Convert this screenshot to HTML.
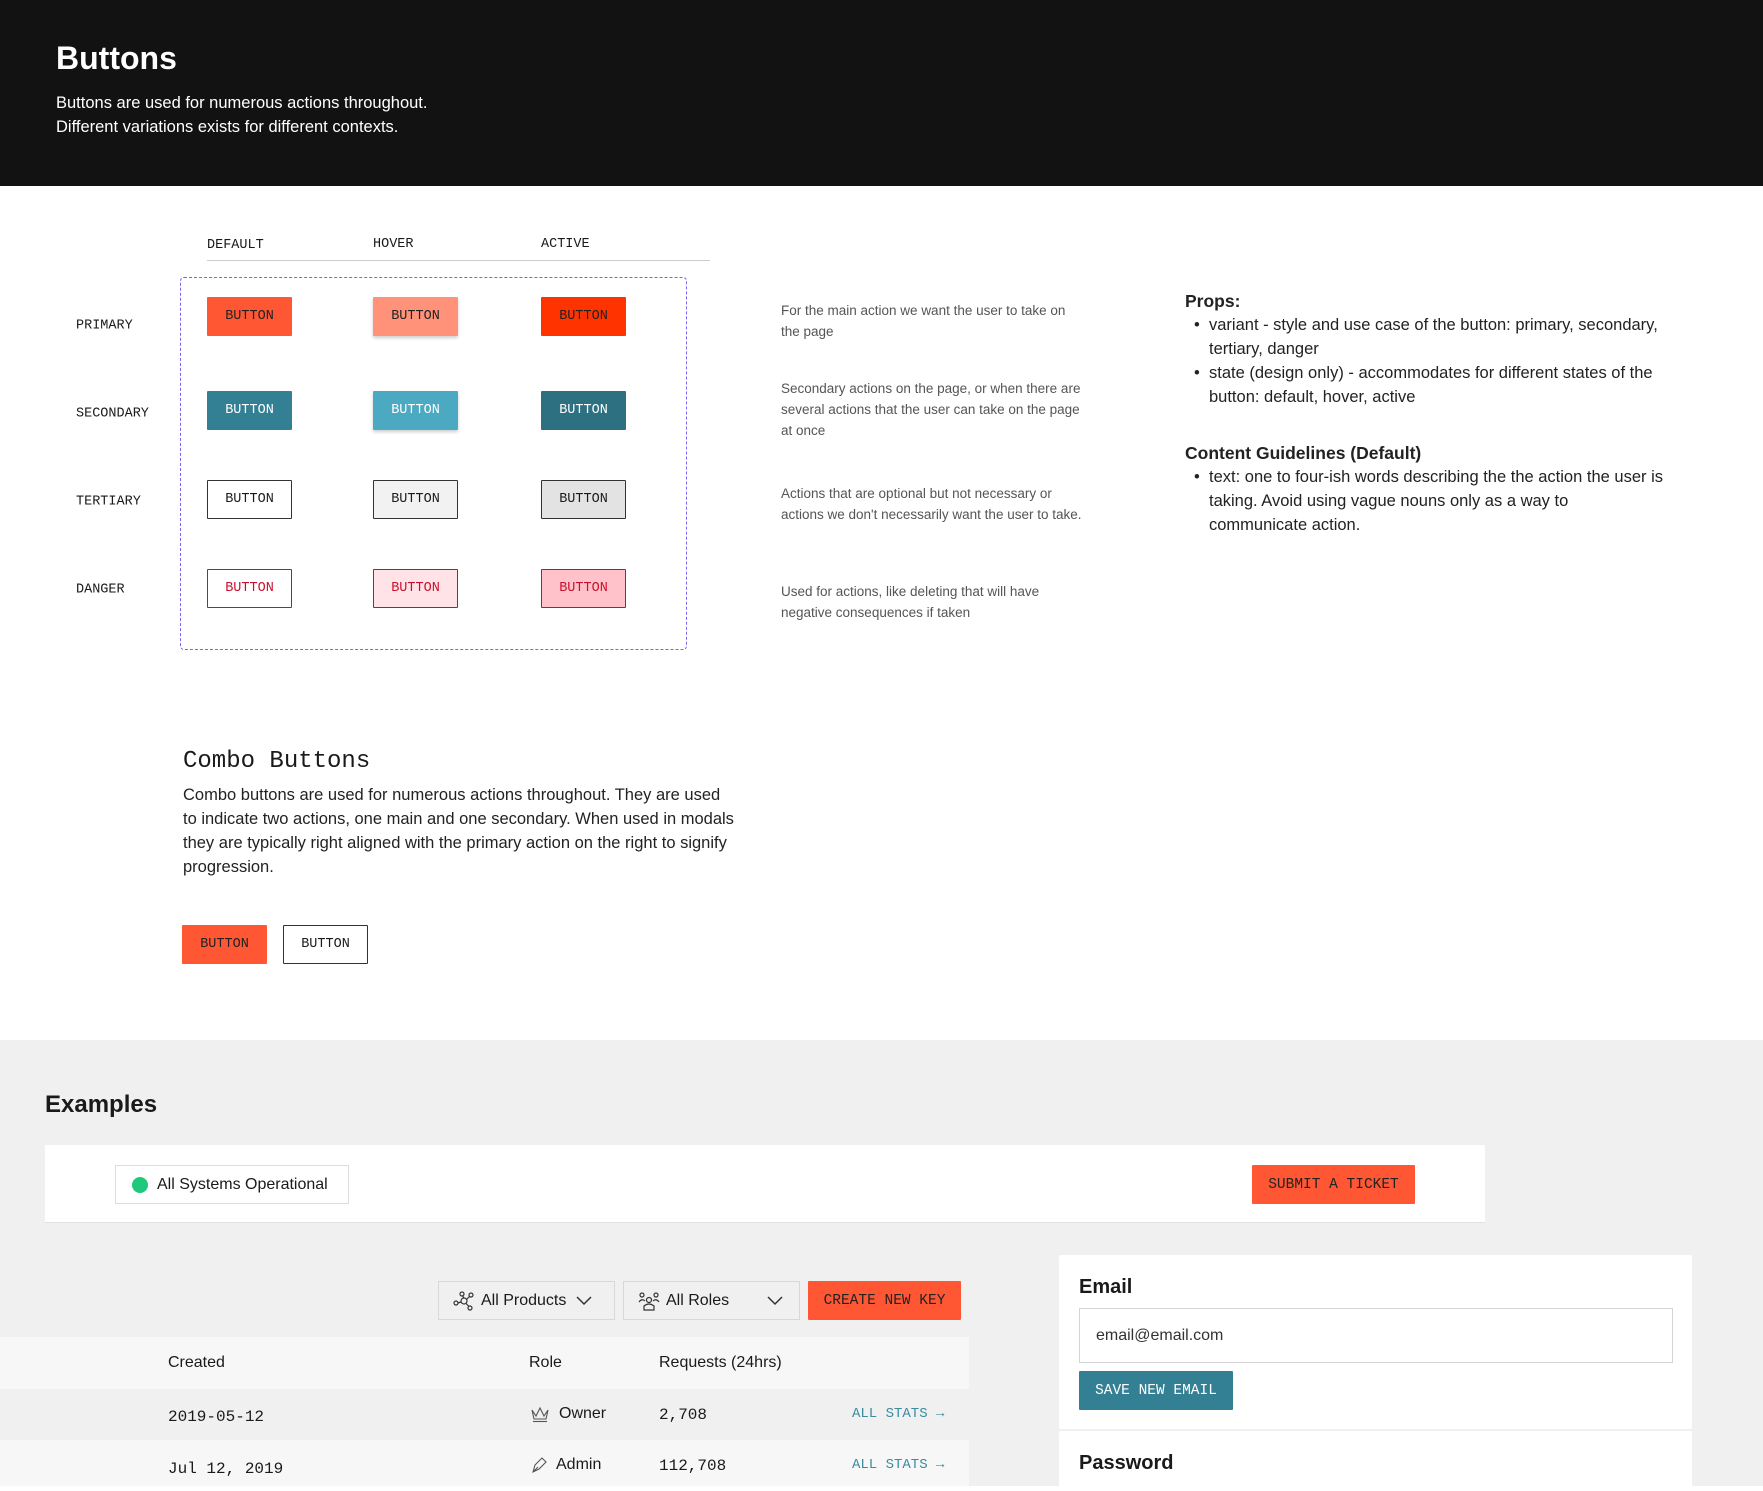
<!DOCTYPE html>
<html><head><meta charset="utf-8"><style>
*{margin:0;padding:0;box-sizing:border-box}
body{width:1763px;height:1486px;position:relative;overflow:hidden;background:#fff;font-family:"Liberation Sans",sans-serif;color:#1a1a1a}
.a{position:absolute}
.m{font-family:"Liberation Mono",monospace}
.hdr{left:0;top:0;width:1763px;height:186px;background:#121212;color:#fff}
.btn{position:absolute;width:85px;height:39px;font-family:"Liberation Mono",monospace;font-size:13.5px;display:flex;align-items:center;justify-content:center;border-radius:1px}
.lbl{position:absolute;left:76px;font-family:"Liberation Mono",monospace;font-size:13.5px;transform:translateY(-50%)}
.desc{position:absolute;left:781px;width:305px;font-size:13.5px;line-height:21px;color:#555}
.p{font-size:16.5px;line-height:24px;color:#222}
ul{list-style:none}
li{position:relative;padding-left:24px}
li:before{content:"•";position:absolute;left:9px}
</style></head><body>
<div class="a hdr">
 <div class="a" style="left:56px;top:40px;font-size:32px;font-weight:bold">Buttons</div>
 <div class="a" style="left:56px;top:91px;font-size:16.5px;line-height:24px">Buttons are used for numerous actions throughout.<br>Different variations exists for different contexts.</div>
</div>

<div class="a m" style="left:207px;top:238px;font-size:13.5px">DEFAULT</div>
<div class="a m" style="left:373px;top:237px;font-size:13.5px">HOVER</div>
<div class="a m" style="left:541px;top:237px;font-size:13.5px">ACTIVE</div>
<div class="a" style="left:207px;top:260px;width:503px;height:1px;background:#ccc"></div>
<div class="a" style="left:180px;top:277px;width:507px;height:373px;border:1.5px dashed #7a63f5;border-radius:4px"></div>

<div class="lbl" style="top:326px">PRIMARY</div>
<div class="lbl" style="top:414px">SECONDARY</div>
<div class="lbl" style="top:502px">TERTIARY</div>
<div class="lbl" style="top:590px">DANGER</div>

<div class="btn" style="left:207px;top:297px;background:#ff5733;color:#222">BUTTON</div>
<div class="btn" style="left:373px;top:297px;background:#ff9279;color:#222;box-shadow:0 2px 3px rgba(0,0,0,.2)">BUTTON</div>
<div class="btn" style="left:541px;top:297px;background:#ff3300;color:#222">BUTTON</div>

<div class="btn" style="left:207px;top:391px;background:#337f93;color:#fff">BUTTON</div>
<div class="btn" style="left:373px;top:391px;background:#4ba9c2;color:#fff;box-shadow:0 2px 3px rgba(0,0,0,.2)">BUTTON</div>
<div class="btn" style="left:541px;top:391px;background:#2c7082;color:#fff">BUTTON</div>

<div class="btn" style="left:207px;top:480px;border:1.5px solid #333;background:#fff">BUTTON</div>
<div class="btn" style="left:373px;top:480px;border:1.5px solid #333;background:#f2f2f2">BUTTON</div>
<div class="btn" style="left:541px;top:480px;border:1.5px solid #333;background:#e3e3e3">BUTTON</div>

<div class="btn" style="left:207px;top:569px;border:1.5px solid #c8102e;background:#fff;color:#c8102e">BUTTON</div>
<div class="btn" style="left:373px;top:569px;border:1.5px solid #c8102e;background:#ffe3e6;color:#c8102e">BUTTON</div>
<div class="btn" style="left:541px;top:569px;border:1.5px solid #c8102e;background:#ffc2ca;color:#c8102e">BUTTON</div>

<div class="desc" style="top:300px">For the main action we want the user to take on the page</div>
<div class="desc" style="top:378px">Secondary actions on the page, or when there are several actions that the user can take on the page at once</div>
<div class="desc" style="top:483px">Actions that are optional but not necessary or actions we don't necessarily want the user to take.</div>
<div class="desc" style="top:581px">Used for actions, like deleting that will have negative consequences if taken</div>

<div class="a p" style="left:1185px;top:289px;width:485px">
 <div style="font-weight:bold;font-size:17.5px">Props:</div>
 <ul><li>variant - style and use case of the button: primary, secondary, tertiary, danger</li>
 <li>state (design only) - accommodates for different states of the button: default, hover, active</li></ul>
 <div style="font-weight:bold;font-size:17.5px;margin-top:32px">Content Guidelines (Default)</div>
 <ul><li>text: one to four-ish words describing the the action the user is taking. Avoid using vague nouns only as a way to communicate action.</li></ul>
</div>

<div class="a m" style="left:183px;top:748px;font-size:24px">Combo Buttons</div>
<div class="a p" style="left:183px;top:783px;width:555px">Combo buttons are used for numerous actions throughout. They are used to indicate two actions, one main and one secondary. When used in modals they are typically right aligned with the primary action on the right to signify progression.</div>
<div class="btn" style="left:182px;top:925px;background:#ff5733;color:#222">BUTTON</div>
<div class="btn" style="left:283px;top:925px;border:1.5px solid #333;background:#fff">BUTTON</div>

<div class="a" style="left:0;top:1040px;width:1763px;height:446px;background:#f0f0f0"></div>
<div class="a" style="left:45px;top:1091px;font-size:24px;font-weight:bold">Examples</div>
<div class="a" style="left:45px;top:1145px;width:1440px;height:78px;background:#fff;border-bottom:1.5px solid #e2e2e2"></div>
<div class="a" style="left:115px;top:1165px;width:234px;height:39px;border:1.5px solid #ddd;background:#fff;display:flex;align-items:center;font-size:16px">
 <span style="width:16px;height:16px;border-radius:50%;background:#1ec97c;margin:0 9px 0 16px"></span>All Systems Operational</div>
<div class="btn" style="left:1252px;top:1165px;width:163px;background:#ff5733;color:#222;font-size:14.5px">SUBMIT A TICKET</div>

<div class="a" style="left:438px;top:1281px;width:177px;height:39px;border:1.5px solid #d8d8d8;background:#f0f0f0;display:flex;align-items:center;font-size:16px">
 <svg width="22" height="20" style="margin:0 6px 0 14px" fill="none" stroke="#333" stroke-width="1.2"><circle cx="3" cy="12" r="2"/><circle cx="11" cy="10" r="3"/><circle cx="9" cy="3" r="2"/><circle cx="18" cy="4" r="2"/><circle cx="17" cy="17" r="2"/><path d="M5 12L8 11M10 5L10.5 7M16.5 5.5L13.5 8.5M13 12.5L16 15.5"/></svg>All Products
 <svg width="16" height="10" style="margin-left:10px" fill="none" stroke="#333" stroke-width="1.5"><path d="M1 1L8 8L15 1"/></svg></div>
<div class="a" style="left:623px;top:1281px;width:177px;height:39px;border:1.5px solid #d8d8d8;background:#f0f0f0;display:flex;align-items:center;font-size:16px">
 <svg width="22" height="20" style="margin:0 6px 0 14px" fill="none" stroke="#333" stroke-width="1.2"><circle cx="4" cy="4" r="2"/><circle cx="18" cy="4" r="2"/><circle cx="11" cy="9" r="2.5"/><path d="M1 11Q4 7 7 10M21 11Q18 7 15 10M6 19V15Q11 11 16 15V19Z"/></svg>All Roles
 <svg width="16" height="10" style="margin-left:auto;margin-right:16px" fill="none" stroke="#333" stroke-width="1.5"><path d="M1 1L8 8L15 1"/></svg></div>
<div class="btn" style="left:808px;top:1281px;width:153px;background:#ff5733;color:#222;font-size:14.5px">CREATE NEW KEY</div>

<div class="a" style="left:0;top:1337px;width:969px;height:52px;background:#f7f7f7;font-size:16px">
 <span class="a" style="left:168px;top:17px">Created</span><span class="a" style="left:529px;top:17px">Role</span><span class="a" style="left:659px;top:17px">Requests (24hrs)</span></div>
<div class="a" style="left:0;top:1389px;width:969px;height:51px;background:#f0f0f0;font-size:16px">
 <span class="a m" style="left:168px;top:19px">2019-05-12</span>
 <svg class="a" style="left:530px;top:16px" width="20" height="18" fill="none" stroke="#555" stroke-width="1.1"><path d="M2 5L6 11L10 3L14 11L18 5L16 14H4Z"/><path d="M3 16.5H17"/></svg>
 <span class="a" style="left:559px;top:16px">Owner</span>
 <span class="a m" style="left:659px;top:17px">2,708</span>
 <span class="a m" style="left:852px;top:17px;color:#3a8ca0;font-size:14px">ALL STATS →</span></div>
<div class="a" style="left:0;top:1440px;width:969px;height:46px;background:#f7f7f7;font-size:16px">
 <span class="a m" style="left:168px;top:20px">Jul 12, 2019</span>
 <svg class="a" style="left:530px;top:16px" width="18" height="18" fill="none" stroke="#555" stroke-width="1.1"><path d="M3 16L5 9L12 2L16 6L9 13Z M3 16L8 11"/></svg>
 <span class="a" style="left:556px;top:16px">Admin</span>
 <span class="a m" style="left:659px;top:17px">112,708</span>
 <span class="a m" style="left:852px;top:17px;color:#3a8ca0;font-size:14px">ALL STATS →</span></div>

<div class="a" style="left:1059px;top:1255px;width:633px;height:174px;background:#fff;border-radius:2px"></div>
<div class="a" style="left:1059px;top:1431px;width:633px;height:60px;background:#fff;border-radius:2px"></div>
<div class="a" style="left:1079px;top:1276px;font-size:20px;font-weight:bold">Email</div>
<div class="a" style="left:1079px;top:1308px;width:594px;height:55px;border:1.5px solid #d4d4d4;font-size:16px;padding:18px 0 0 16px;color:#333">email@email.com</div>
<div class="btn" style="left:1079px;top:1371px;width:154px;background:#337f93;color:#fff;font-size:14.5px">SAVE NEW EMAIL</div>
<div class="a" style="left:1079px;top:1452px;font-size:20px;font-weight:bold">Password</div>
</body></html>
